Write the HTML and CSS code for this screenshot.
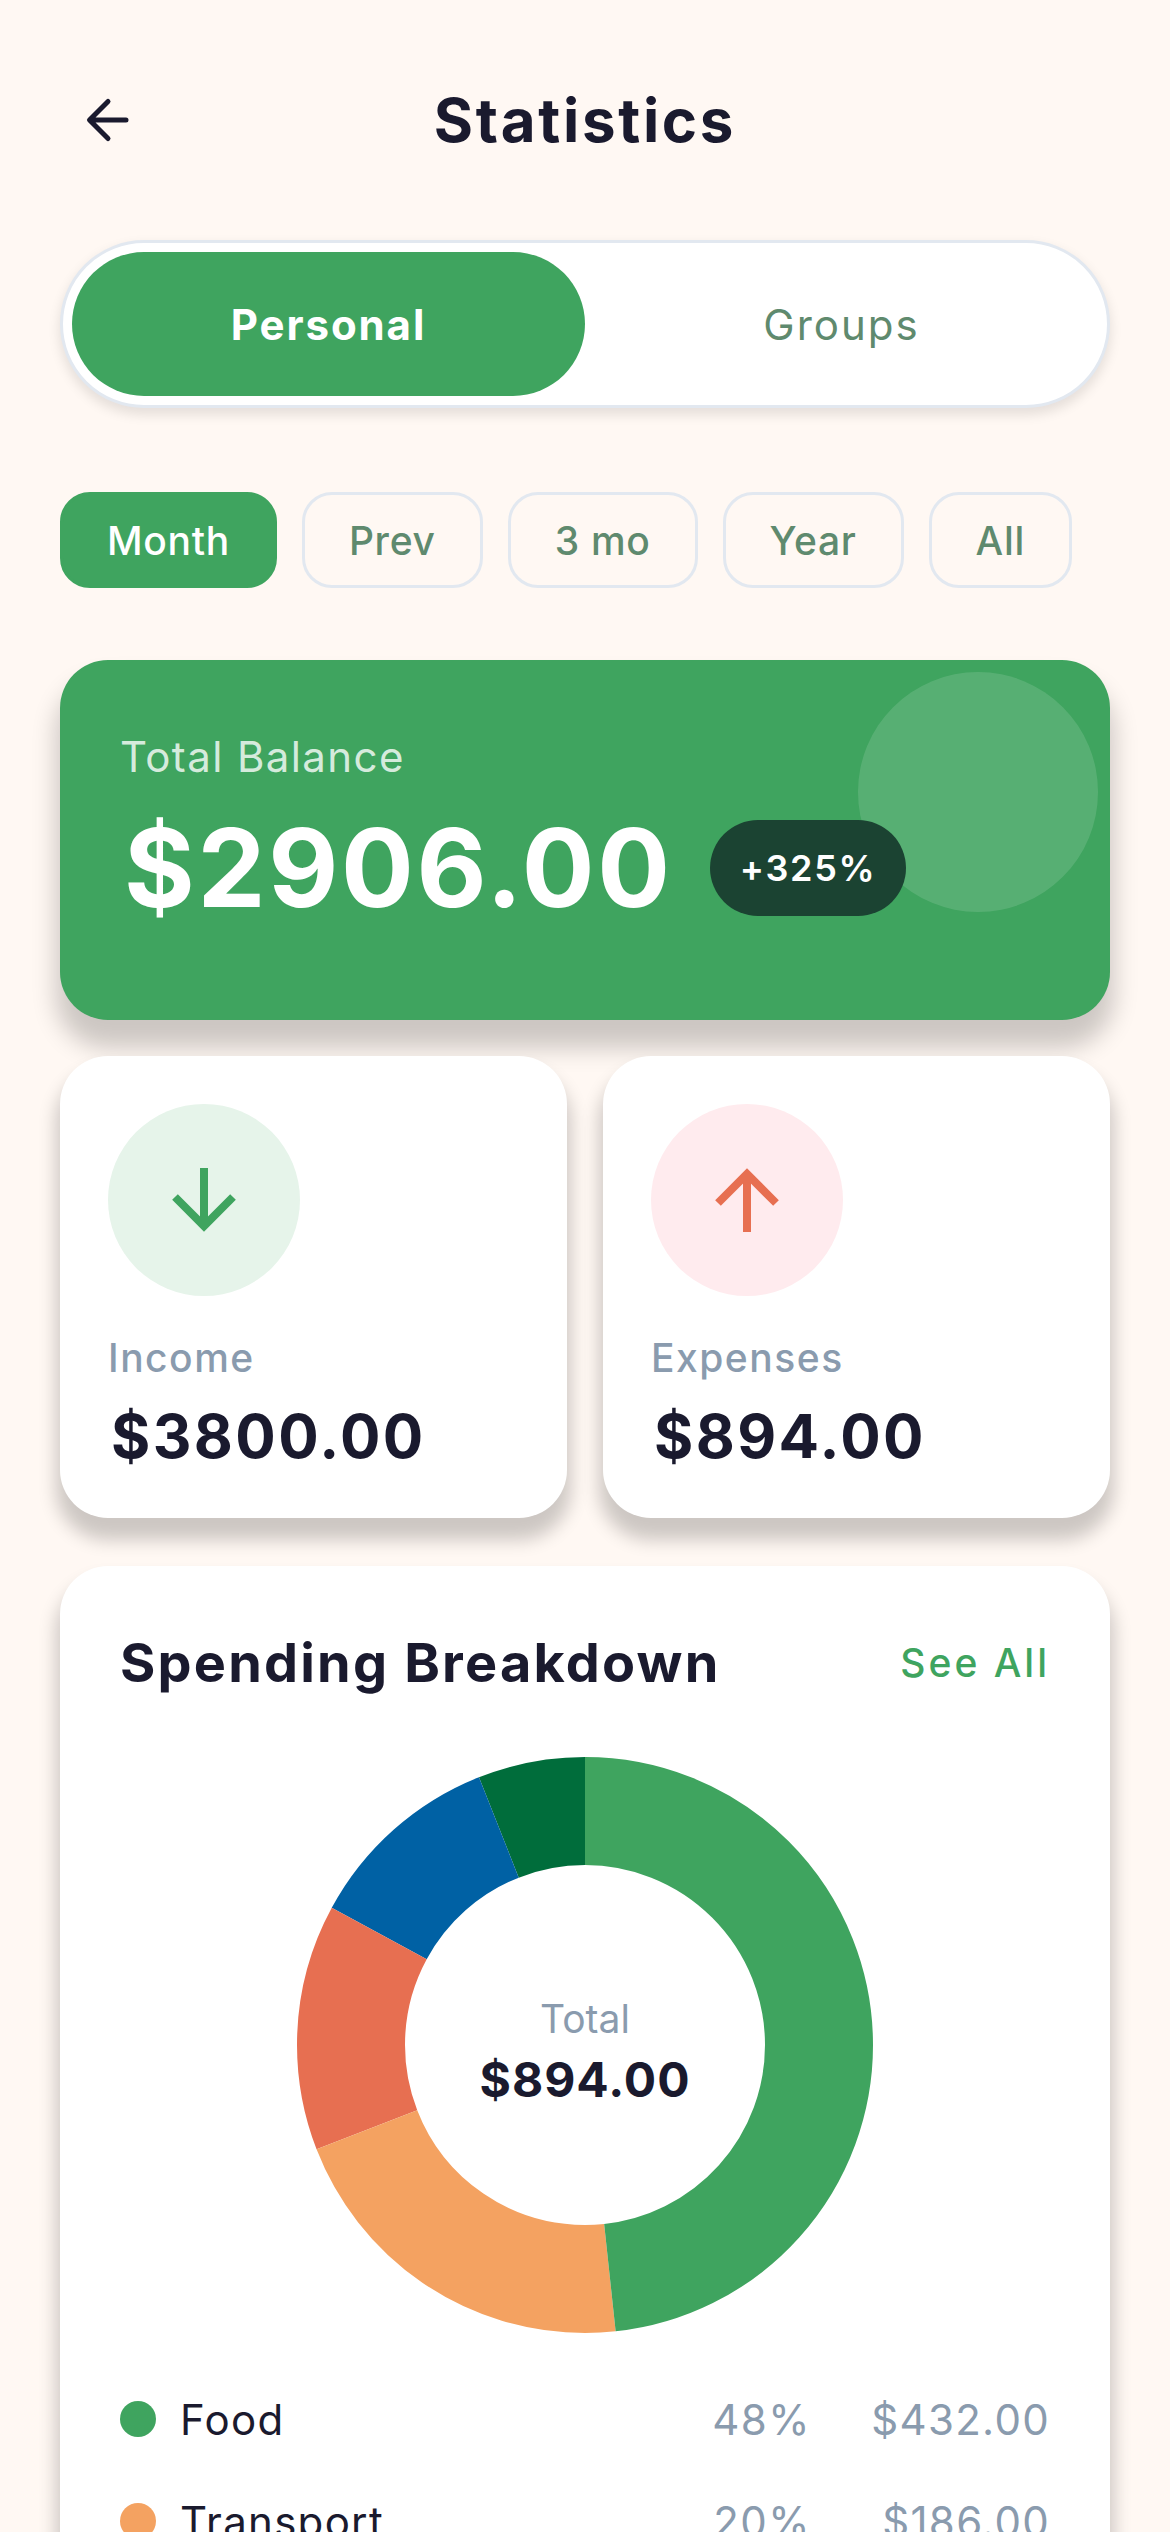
FILE: index.html
```html
<!DOCTYPE html>
<html lang="en">
<head>
<meta charset="utf-8">
<title>Statistics</title>
<link rel="stylesheet" href="styles.css">
</head>
<body>
<main class="page">
  <header class="header">
    <svg class="back" viewBox="0 0 48 48" width="48" height="48" aria-hidden="true">
      <path d="M42 24H6M24 5.500 5.500 24 24 42.500" fill="none" stroke="#1a1a2e" stroke-width="5" stroke-linecap="round" stroke-linejoin="round"/>
    </svg>
    <h1 class="title">Statistics</h1>
  </header>

  <div class="segment">
    <div class="segment-item segment-active">Personal</div>
    <div class="segment-item">Groups</div>
  </div>

  <div class="chips">
    <div class="chip chip-active">Month</div>
    <div class="chip">Prev</div>
    <div class="chip">3 mo</div>
    <div class="chip">Year</div>
    <div class="chip">All</div>
  </div>

  <section class="balance">
    <div class="balance-circle"></div>
    <div class="balance-label">Total Balance</div>
    <div class="balance-row">
      <div class="balance-amount">$2906.00</div>
      <div class="badge">+325%</div>
    </div>
  </section>

  <div class="stats">
    <section class="stat">
      <div class="stat-icon stat-icon-in">
        <svg viewBox="0 0 72 72" width="72" height="72" aria-hidden="true"><path d="M36 4V62M7 33 36 62 65 33" fill="none" stroke="#3fa45f" stroke-width="8"/></svg>
      </div>
      <div class="stat-label">Income</div>
      <div class="stat-value">$3800.00</div>
    </section>
    <section class="stat">
      <div class="stat-icon stat-icon-out">
        <svg viewBox="0 0 72 72" width="72" height="72" aria-hidden="true"><path d="M36 68V10M7 39 36 10 65 39" fill="none" stroke="#e76f51" stroke-width="8"/></svg>
      </div>
      <div class="stat-label">Expenses</div>
      <div class="stat-value">$894.00</div>
    </section>
  </div>

  <section class="spending">
    <div class="spending-head">
      <h2 class="spending-title">Spending Breakdown</h2>
      <div class="see-all">See All</div>
    </div>
    <div class="donut">
      <svg class="donut-svg" viewBox="0 0 576 576" width="576" height="576" aria-hidden="true">
        <g fill="none" stroke-width="108" transform="rotate(-90 288 288)">
          <circle cx="288" cy="288" r="234" pathLength="100" stroke="#006d3b" stroke-dasharray="6 94" stroke-dashoffset="6"/>
          <circle cx="288" cy="288" r="234" pathLength="100" stroke="#0061a4" stroke-dasharray="11.100 88.900" stroke-dashoffset="17.100"/>
          <circle cx="288" cy="288" r="234" pathLength="100" stroke="#e76f51" stroke-dasharray="13.800 86.200" stroke-dashoffset="30.900"/>
          <circle cx="288" cy="288" r="234" pathLength="100" stroke="#f4a261" stroke-dasharray="20.800 79.200" stroke-dashoffset="51.700"/>
          <circle cx="288" cy="288" r="234" pathLength="100" stroke="#3fa45f" stroke-dasharray="48.300 51.700" stroke-dashoffset="0"/>
        </g>
      </svg>
      <div class="donut-center">
        <div class="donut-label">Total</div>
        <div class="donut-value">$894.00</div>
      </div>
    </div>
    <ul class="legend">
      <li class="legend-row">
        <span class="dot dot-food"></span>
        <span class="legend-name">Food</span>
        <span class="legend-pct">48%</span>
        <span class="legend-amt">$432.00</span>
      </li>
      <li class="legend-row">
        <span class="dot dot-transport"></span>
        <span class="legend-name">Transport</span>
        <span class="legend-pct">20%</span>
        <span class="legend-amt">$186.00</span>
      </li>
    </ul>
  </section>
</main>
</body>
</html>
```

FILE: styles.css
```css
* { box-sizing: border-box; }
html, body {
  margin: 0;
  padding: 0;
  height: 2532px;
  overflow: hidden;
  background: #fff8f3;
}
body {
  font-family: Inter, "Liberation Sans", sans-serif;
  color: #1a1a2e;
}
.page {
  width: 1170px;
  height: 2532px;
  padding: 72px 60px 0;
  overflow: hidden;
}

.header {
  display: flex;
  align-items: center;
  justify-content: center;
  position: relative;
  height: 96px;
}
.back {
  position: absolute;
  left: 24px;
  top: 24px;
  display: block;
}
.title {
  margin: 0;
  font-size: 60px;
  font-weight: 700;
  letter-spacing: 2.700px;
  line-height: 96px;
}

.segment {
  margin-top: 72px;
  height: 168px;
  padding: 9px;
  display: flex;
  background: #fff;
  border: 3px solid #e2e8f0;
  border-radius: 84px;
  box-shadow: 0 6px 12px 1px rgba(0, 0, 0, .1);
}
.segment-item {
  flex: 1;
  display: flex;
  align-items: center;
  justify-content: center;
  border-radius: 72px;
  font-size: 42px;
  font-weight: 400;
  letter-spacing: 2px;
  color: #5f8a6e;
}
.segment-active {
  background: #3fa45f;
  color: #fff;
  font-weight: 700;
  letter-spacing: 1.900px;
}

.chips {
  margin-top: 84px;
  display: flex;
  gap: 25px;
}
.chip {
  height: 96px;
  padding: 0 44px;
  display: flex;
  align-items: center;
  border: 3px solid #e2e8f0;
  border-radius: 30px;
  font-size: 39px;
  font-weight: 500;
  letter-spacing: .7px;
  color: #5f8a6e;
}
.chip-active {
  background: #3fa45f;
  border-color: #3fa45f;
  color: #fff;
}

.balance {
  position: relative;
  margin-top: 72px;
  height: 360px;
  padding: 73px 60px 0;
  background: #3fa45f;
  border-radius: 48px;
  box-shadow: 0 24px 24px 4px rgba(0, 0, 0, .2);
}
.balance-circle {
  position: absolute;
  top: 12px;
  right: 12px;
  width: 240px;
  height: 240px;
  border-radius: 50%;
  background: rgba(255, 255, 255, .13);
}
.balance-label {
  font-size: 42px;
  line-height: 48px;
  letter-spacing: 1.400px;
  color: rgba(255, 255, 255, .8);
}
.balance-row {
  position: relative;
  margin-top: 24px;
  display: flex;
  align-items: center;
  gap: 37px;
}
.balance-amount {
  font-size: 108px;
  font-weight: 700;
  line-height: 126px;
  letter-spacing: 2.700px;
  color: #fff;
  padding-left: 4px;
}
.badge {
  height: 96px;
  padding: 0 30px;
  display: flex;
  align-items: center;
  border-radius: 48px;
  background: #1b4332;
  color: #fff;
  font-size: 36px;
  font-weight: 600;
  letter-spacing: 1.700px;
}

.stats {
  margin-top: 36px;
  display: grid;
  grid-template-columns: 1fr 1fr;
  gap: 36px;
}
.stat {
  position: relative;
  height: 462px;
  padding: 48px;
  background: #fff;
  border-radius: 48px;
  box-shadow: 0 18px 18px 4px rgba(0, 0, 0, .2);
}
.stat-icon {
  width: 192px;
  height: 192px;
  border-radius: 50%;
  display: flex;
  align-items: center;
  justify-content: center;
}
.stat-icon svg { display: block; }
.stat-icon-in { background: #e6f4ea; }
.stat-icon-out { background: #ffebee; }
.stat-label {
  margin-top: 38px;
  font-size: 39px;
  line-height: 48px;
  font-weight: 500;
  letter-spacing: 1.500px;
  color: #8a9bae;
}
.stat-value {
  margin-top: 12px;
  padding-left: 3px;
  font-size: 60px;
  line-height: 84px;
  font-weight: 700;
  letter-spacing: 2.400px;
}

.spending {
  position: relative;
  margin-top: 48px;
  height: 1200px;
  padding: 60px;
  background: #fff;
  border-radius: 48px;
  box-shadow: 0 18px 18px 4px rgba(0, 0, 0, .2);
}
.spending-head {
  display: flex;
  justify-content: space-between;
  align-items: center;
  height: 72px;
}
.spending-title {
  margin: 0;
  font-size: 54px;
  font-weight: 700;
  letter-spacing: 2.200px;
}
.see-all {
  font-size: 39px;
  font-weight: 500;
  letter-spacing: 3px;
  color: #3fa45f;
}
.donut {
  position: relative;
  width: 576px;
  height: 576px;
  margin: 59px auto 0;
}
.donut-svg { display: block; }
.donut-center {
  position: absolute;
  inset: 0;
  padding-top: 14px;
  display: flex;
  flex-direction: column;
  align-items: center;
  justify-content: center;
}
.donut-label {
  font-size: 39px;
  line-height: 48px;
  color: #8a9bae;
}
.donut-value {
  margin-top: 7px;
  font-size: 48px;
  line-height: 60px;
  font-weight: 700;
  letter-spacing: 1px;
}
.legend {
  list-style: none;
  margin: 35px 0 0;
  padding: 0;
}
.legend-row {
  display: flex;
  align-items: center;
  height: 102px;
  font-size: 42px;
  letter-spacing: 1.300px;
}
.dot {
  width: 36px;
  height: 36px;
  border-radius: 50%;
  margin-right: 24px;
}
.dot-food { background: #3fa45f; }
.dot-transport { background: #f4a261; }
.legend-name { flex: 1; }
.legend-pct { color: #8a9bae; letter-spacing: 1.500px; }
.legend-amt {
  color: #8a9bae;
  width: 239px;
  text-align: right;
}
```
